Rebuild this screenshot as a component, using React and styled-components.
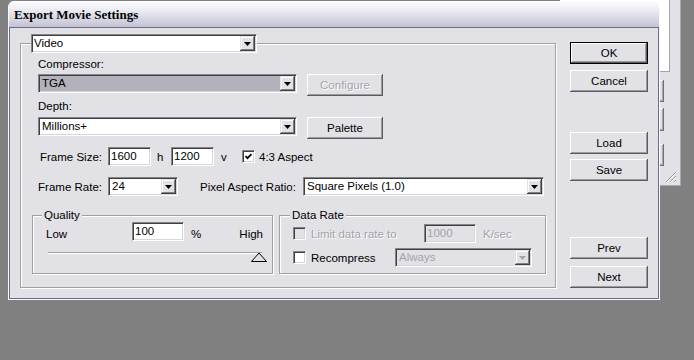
import React from "react";
import styled, { createGlobalStyle, css } from "styled-components";

const BG = "#e2e1e6";

const GlobalStyle = createGlobalStyle`
  html, body {
    margin: 0;
    padding: 0;
    background: #808080;
  }
  body {
    font-family: "Liberation Sans", Arial, sans-serif;
    font-size: 11.5px;
    color: #000;
  }
`;

const Desktop = styled.div`
  position: relative;
  width: 694px;
  height: 360px;
  overflow: hidden;
  box-sizing: border-box;
  padding: 1px 0 0 8px;
  background: #808080;
`;

// window sitting behind the dialog, on the right
const BackWindow = styled.div`
  position: absolute;
  left: 560px;
  top: 0;
  width: 120px;
  height: 185px;
  background: ${BG};
  border-right: 1px solid #a9a8b0;
  border-bottom: 1px solid #a9a8b0;
`;

const ListArea = styled.div`
  width: 109px;
  height: 71px;
  background: #fff;
  border-right: 1px solid #a3a2aa;
  border-bottom: 1px solid #a3a2aa;
`;

const StubButton = styled.div`
  width: 104px;
  height: ${(p) => p.$h}px;
  margin-top: ${(p) => p.$mt}px;
  box-shadow: inset -1px -1px 0 #707070, inset 1px 1px 0 #fff,
    inset -2px -2px 0 #a8a8ae;
`;

const Gripper = styled.svg`
  position: absolute;
  right: 3px;
  bottom: 2px;
`;

const Dialog = styled.div`
  position: relative;
  z-index: 1;
  width: 652px;
  height: 299px;
  box-sizing: border-box;
  display: flex;
  flex-direction: column;
  background: ${BG};
  border: 1px solid #fafaff;
  border-top: none;
  border-radius: 6px 9px 0 0;
  overflow: hidden;
`;

const TitleBar = styled.div`
  height: 26px;
  flex-shrink: 0;
  padding-left: 5px;
  background: linear-gradient(#fdfdff 0%, #ebebf3 35%, #c4c3d4 100%);
  font-family: "Liberation Serif", "Times New Roman", serif;
  font-weight: bold;
  font-size: 13px;
  line-height: 27px;
  color: #000;
`;

const Client = styled.div`
  flex: 1;
  display: flex;
  align-items: flex-start;
  border: 1px solid #6d6c88;
`;

const Etched = styled.div`
  position: relative;
  box-sizing: border-box;
  flex-shrink: 0;
  border: 1px solid #a09fa6;
  box-shadow: inset 1px 1px 0 #fff, 1px 1px 0 #fff;
`;

const MainGroup = styled(Etched)`
  width: 536px;
  height: 245px;
  margin: 15px 0 0 10px;
  padding: 13px 0 0 11px;
  display: flex;
  flex-direction: column;
`;

const SubGroup = styled(Etched)`
  width: ${(p) => p.$w}px;
  height: 59px;
  padding: ${(p) => p.$pad};
  display: flex;
  flex-direction: column;
`;

const Legend = styled.div`
  position: absolute;
  top: ${(p) => p.$top}px;
  left: ${(p) => p.$left}px;
  padding: ${(p) => (p.$bare ? "0" : "0 2px")};
  background: ${BG};
  line-height: 14px;
`;

const Section = styled.div`
  display: flex;
  flex-direction: column;
  padding-left: 6px;
`;

const Row = styled.div`
  display: flex;
  align-items: ${(p) => p.$align || "center"};
  margin-top: ${(p) => p.$mt || 0}px;
  ${(p) => p.$gap && css`gap: ${p.$gap}px;`}
`;

const Label = styled.span`
  display: inline-block;
  flex-shrink: 0;
  width: ${(p) => (p.$w ? `${p.$w}px` : "auto")};
  margin-left: ${(p) => (p.$ml === "auto" ? "auto" : `${p.$ml || 0}px`)};
  text-align: ${(p) => (p.$right ? "right" : "left")};
  line-height: 14px;
  white-space: nowrap;
  color: ${(p) => (p.$disabled ? "#a4a3aa" : "#000")};
  text-shadow: ${(p) => (p.$disabled ? "1px 1px 0 #fff" : "none")};
`;

const Inset = styled.div`
  box-sizing: border-box;
  flex-shrink: 0;
  display: flex;
  align-items: stretch;
  width: ${(p) => p.$w}px;
  height: 19px;
  margin-left: ${(p) => p.$ml || 0}px;
  padding: 1px;
  border: 1px solid;
  border-color: #858489 #fff #fff #858489;
  box-shadow: inset 1px 1px 0 #404040, inset -1px -1px 0 #d6d5da;
  background: ${(p) => p.$fill};
`;

const FieldText = styled.span`
  flex: 1;
  padding-left: ${(p) => p.$pl}px;
  line-height: 15px;
  white-space: nowrap;
  overflow: hidden;
  color: ${(p) => (p.$disabled ? "#a4a3aa" : "#000")};
`;

const ArrowButton = styled.span`
  width: 15px;
  display: flex;
  align-items: center;
  justify-content: center;
  background: ${BG};
  box-shadow: inset -1px -1px 0 #404040, inset 1px 1px 0 ${BG},
    inset -2px -2px 0 #808080, inset 2px 2px 0 #fff;
`;

const Button = styled.button`
  box-sizing: border-box;
  flex-shrink: 0;
  width: ${(p) => p.$w}px;
  height: 22px;
  margin: ${(p) => p.$mt || 0}px 0 0 ${(p) => p.$ml || 0}px;
  padding: 0;
  border: ${(p) => (p.$default ? "1px solid #000" : "none")};
  background: ${BG};
  font: inherit;
  color: ${(p) => (p.disabled ? "#a4a3aa" : "#000")};
  text-shadow: ${(p) => (p.disabled ? "1px 1px 0 #fff" : "none")};
  box-shadow: inset -1px -1px 0 #5c5c5c, inset 1px 1px 0 #fff,
    inset -2px -2px 0 #9a9aa0;
`;

const ButtonColumn = styled.div`
  display: flex;
  flex-direction: column;
  margin-left: 14px;
`;

const CheckBox = styled.span`
  box-sizing: border-box;
  flex-shrink: 0;
  width: 13px;
  height: 13px;
  margin-left: ${(p) => p.$ml || 0}px;
  display: flex;
  align-items: center;
  justify-content: center;
  border: 1px solid;
  border-color: #858489 #fff #fff #858489;
  box-shadow: inset 1px 1px 0 #404040, inset -1px -1px 0 #d6d5da;
  background: ${(p) => (p.$disabled ? BG : "#fff")};
`;

const Slider = styled.div`
  position: relative;
  width: 219px;
  height: 10px;
  margin: 11px 0 0 2px;
`;

const Track = styled.div`
  height: 0;
  margin-right: 5px;
  border-top: 1px solid #a09fa6;
  border-bottom: 1px solid #fff;
`;

const Thumb = styled.svg`
  position: absolute;
  right: 0;
  top: 0;
`;

const Arrow = ({ disabled }) => (
  <svg width="7" height="4" viewBox="0 0 7 4">
    <polygon points="0,0 7,0 3.5,4" fill={disabled ? "#a4a3aa" : "#000"} />
  </svg>
);

const Select = ({ w, ml, value, fill, disabled, pl = 2 }) => (
  <Inset $w={w} $ml={ml} $fill={disabled ? BG : fill || "#fff"}>
    <FieldText $pl={pl} $disabled={disabled}>
      {value}
    </FieldText>
    <ArrowButton>
      <Arrow disabled={disabled} />
    </ArrowButton>
  </Inset>
);

const Field = ({ w, ml, value, disabled }) => (
  <Inset $w={w} $ml={ml} $fill={disabled ? BG : "#fff"}>
    <FieldText $pl={1} $disabled={disabled}>
      {value}
    </FieldText>
  </Inset>
);

const Check = ({ checked, disabled, ml }) => (
  <CheckBox $disabled={disabled} $ml={ml}>
    {checked && (
      <svg width="7" height="7" viewBox="0 0 7 7">
        <polyline
          points="0.5,3 2.5,5.2 6.5,1"
          fill="none"
          stroke="#000"
          strokeWidth="1.8"
        />
      </svg>
    )}
  </CheckBox>
);

export default function App() {
  return (
    <>
      <GlobalStyle />
      <Desktop>
        <BackWindow>
          <ListArea />
          <StubButton $mt={8} $h={22} />
          <StubButton $mt={6} $h={23} />
          <StubButton $mt={13} $h={22} />
          <Gripper width="12" height="12" viewBox="0 0 12 12">
            <path d="M11 1 L1 11 M11 5 L5 11 M11 9 L9 11" stroke="#9a99a0" />
            <path d="M11 2 L2 11 M11 6 L6 11 M11 10 L10 11" stroke="#fff" />
          </Gripper>
        </BackWindow>

        <Dialog>
          <TitleBar>Export Movie Settings</TitleBar>
          <Client>
            <MainGroup>
              <Legend $top={-10} $left={10} $bare>
                <Select w={226} value="Video" pl={1} />
              </Legend>

              <Section>
                <Label>Compressor:</Label>
                <Row $mt={3} $align="flex-start">
                  <Select w={259} value="TGA" fill="#b2b1bc" />
                  <Button $w={76} $ml={10} disabled>
                    Configure
                  </Button>
                </Row>
                <Row $mt={3}>
                  <Label>Depth:</Label>
                </Row>
                <Row $mt={4} $align="flex-start">
                  <Select w={259} value="Millions+" />
                  <Button $w={76} $ml={10}>
                    Palette
                  </Button>
                </Row>

                <Row $mt={8}>
                  <Label $w={64} $right>
                    Frame Size:
                  </Label>
                  <Field w={43} ml={6} value="1600" />
                  <Label $w={8} $ml={6}>
                    h
                  </Label>
                  <Field w={43} ml={6} value="1200" />
                  <Label $w={6} $ml={7}>
                    v
                  </Label>
                  <Check checked ml={15} />
                  <Label $ml={4}>4:3 Aspect</Label>
                </Row>

                <Row $mt={11}>
                  <Label $w={64} $right>
                    Frame Rate:
                  </Label>
                  <Select w={70} ml={6} value="24" />
                  <Label $w={103} $ml={22}>
                    Pixel Aspect Ratio:
                  </Label>
                  <Select w={241} value="Square Pixels (1.0)" />
                </Row>
              </Section>

              <Row $mt={19} $align="flex-start" $gap={6}>
                <SubGroup $w={241} $pad="6px 9px 0 13px">
                  <Legend $top={-8} $left={9}>
                    Quality
                  </Legend>
                  <Row $align="flex-end">
                    <Label $w={86}>Low</Label>
                    <Field w={52} value="100" />
                    <Label $ml={7}>%</Label>
                    <Label $ml="auto">High</Label>
                  </Row>
                  <Slider>
                    <Track />
                    <Thumb width="16" height="10" viewBox="0 0 16 10">
                      <polygon
                        points="0.5,9.5 8,1 15.5,9.5"
                        fill="none"
                        stroke="#000"
                      />
                    </Thumb>
                  </Slider>
                </SubGroup>

                <SubGroup $w={267} $pad="8px 0 0 13px">
                  <Legend $top={-8} $left={10}>
                    Data Rate
                  </Legend>
                  <Row>
                    <Check disabled />
                    <Label $w={113} $ml={5} $disabled>
                      Limit data rate to
                    </Label>
                    <Field w={52} value="1000" disabled />
                    <Label $ml={7} $disabled>
                      K/sec
                    </Label>
                  </Row>
                  <Row $mt={5}>
                    <Check />
                    <Label $w={84} $ml={5}>
                      Recompress
                    </Label>
                    <Select w={137} value="Always" disabled />
                  </Row>
                </SubGroup>
              </Row>
            </MainGroup>

            <ButtonColumn>
              <Button $w={78} $mt={14} $default>
                OK
              </Button>
              <Button $w={78} $mt={6}>
                Cancel
              </Button>
              <Button $w={78} $mt={40}>
                Load
              </Button>
              <Button $w={78} $mt={5}>
                Save
              </Button>
              <Button $w={78} $mt={56}>
                Prev
              </Button>
              <Button $w={78} $mt={7}>
                Next
              </Button>
            </ButtonColumn>
          </Client>
        </Dialog>
      </Desktop>
    </>
  );
}
